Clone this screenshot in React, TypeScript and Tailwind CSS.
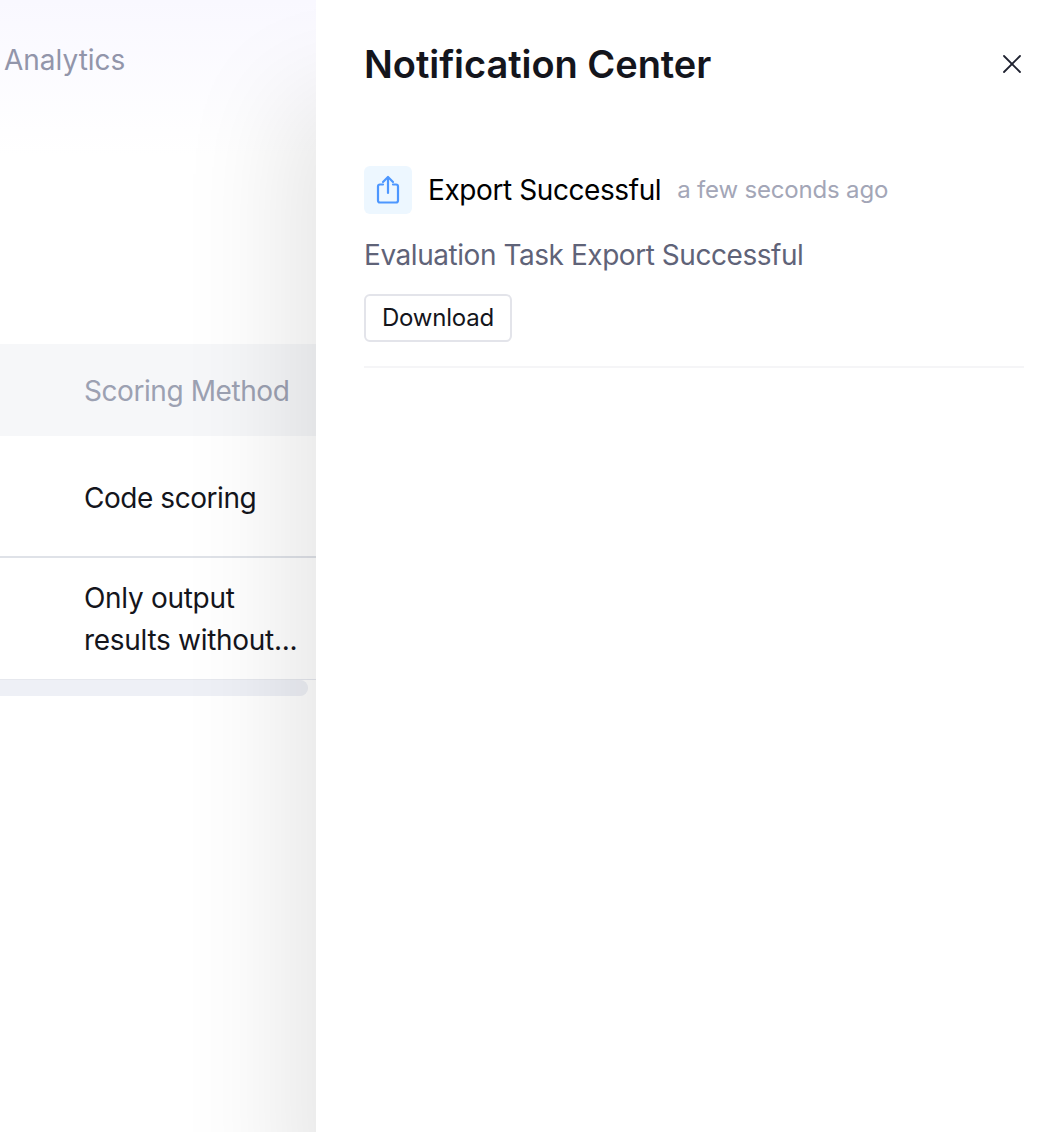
import * as React from "react";

/* Notification drawer open over a dimmed analytics table */

function ShareIcon() {
  return (
    <svg width="26" height="30" viewBox="0 0 26 30" fill="none" stroke="#4d97ff" strokeWidth="2.2" strokeLinecap="round" strokeLinejoin="round">
      <path d="M8 9.5H5a2 2 0 0 0-2 2v14a2 2 0 0 0 2 2h16a2 2 0 0 0 2-2v-14a2 2 0 0 0-2-2h-3" />
      <path d="M13 18V2.5" />
      <path d="M8 7L13 2L18 7" />
    </svg>
  );
}

function CloseIcon() {
  return (
    <svg width="20" height="20" viewBox="0 0 20 20" fill="none" stroke="#1f2230" strokeWidth="1.8" strokeLinecap="round">
      <path d="M2 2L18 18" />
      <path d="M18 2L2 18" />
    </svg>
  );
}

function LeftPanel() {
  return (
    <div className="w-[316px] shrink-0 flex flex-col overflow-hidden">
      <div className="h-[344px] shrink-0 bg-gradient-to-b from-[#f9f8ff] to-white to-45% pt-[42px]">
        <div className="pl-[4px] text-[28px] leading-[36px] text-[#9295aa]">Analytics</div>
      </div>
      <div className="h-[92px] shrink-0 bg-[#f6f7f9] pl-[84px] pt-[2px] flex items-center text-[28px] tracking-[-0.43px] text-[#9ca1b2] whitespace-nowrap">
        Scoring Method
      </div>
      <div className="h-[122px] shrink-0 pl-[84px] pt-[3px] flex items-center text-[28px] tracking-[-0.45px] text-[#14151c] border-b-2 border-[#dfe2e8]">
        Code scoring
      </div>
      <div className="h-[122px] shrink-0 pl-[84px] flex flex-col justify-center text-[28px] leading-[42px] tracking-[-0.3px] text-[#14151c] border-b border-[#e6e8ee] whitespace-nowrap">
        <span>Only output</span>
        <span>results without...</span>
      </div>
      <div className="h-[16px] w-[308px] shrink-0 rounded-r-full bg-[#eef0f6]" />
    </div>
  );
}

function Drawer() {
  return (
    <div className="relative flex-1 bg-white pl-[48px] pr-[40px] pt-[37px] shadow-[-30px_95px_100px_0_rgba(0,0,0,0.1)]">
      <div className="flex items-center justify-between h-[54px]">
        <h1 className="text-[38px] leading-[54px] font-semibold tracking-[-0.05px] text-[#14151c]">Notification Center</h1>
        <button className="mr-[2px]"><CloseIcon /></button>
      </div>
      <div className="mt-[75px] border-b-2 border-[#f5f5f7] pb-[24px]">
        <div className="flex items-center h-[48px]">
          <div className="w-[48px] h-[48px] rounded-[6px] bg-[#edf7ff] flex items-center justify-center">
            <ShareIcon />
          </div>
          <span className="ml-[16px] text-[28px] tracking-[-0.41px] text-black">Export Successful</span>
          <span className="ml-[16px] text-[24px] tracking-[-0.18px] text-[#a3a6b7]">a few seconds ago</span>
        </div>
        <p className="mt-[20px] text-[28px] leading-[42px] tracking-[-0.45px] text-[#5f6378]">Evaluation Task Export Successful</p>
        <button className="mt-[18px] block w-[148px] h-[48px] rounded-[6px] border-2 border-[#e3e4ea] bg-white text-[24px] tracking-[-0.2px] text-[#14151c]">
          Download
        </button>
      </div>
    </div>
  );
}

export default function App() {
  return (
    <div className="flex h-[1132px] w-[1064px] overflow-hidden bg-white font-['Inter',sans-serif]">
      <LeftPanel />
      <Drawer />
    </div>
  );
}
